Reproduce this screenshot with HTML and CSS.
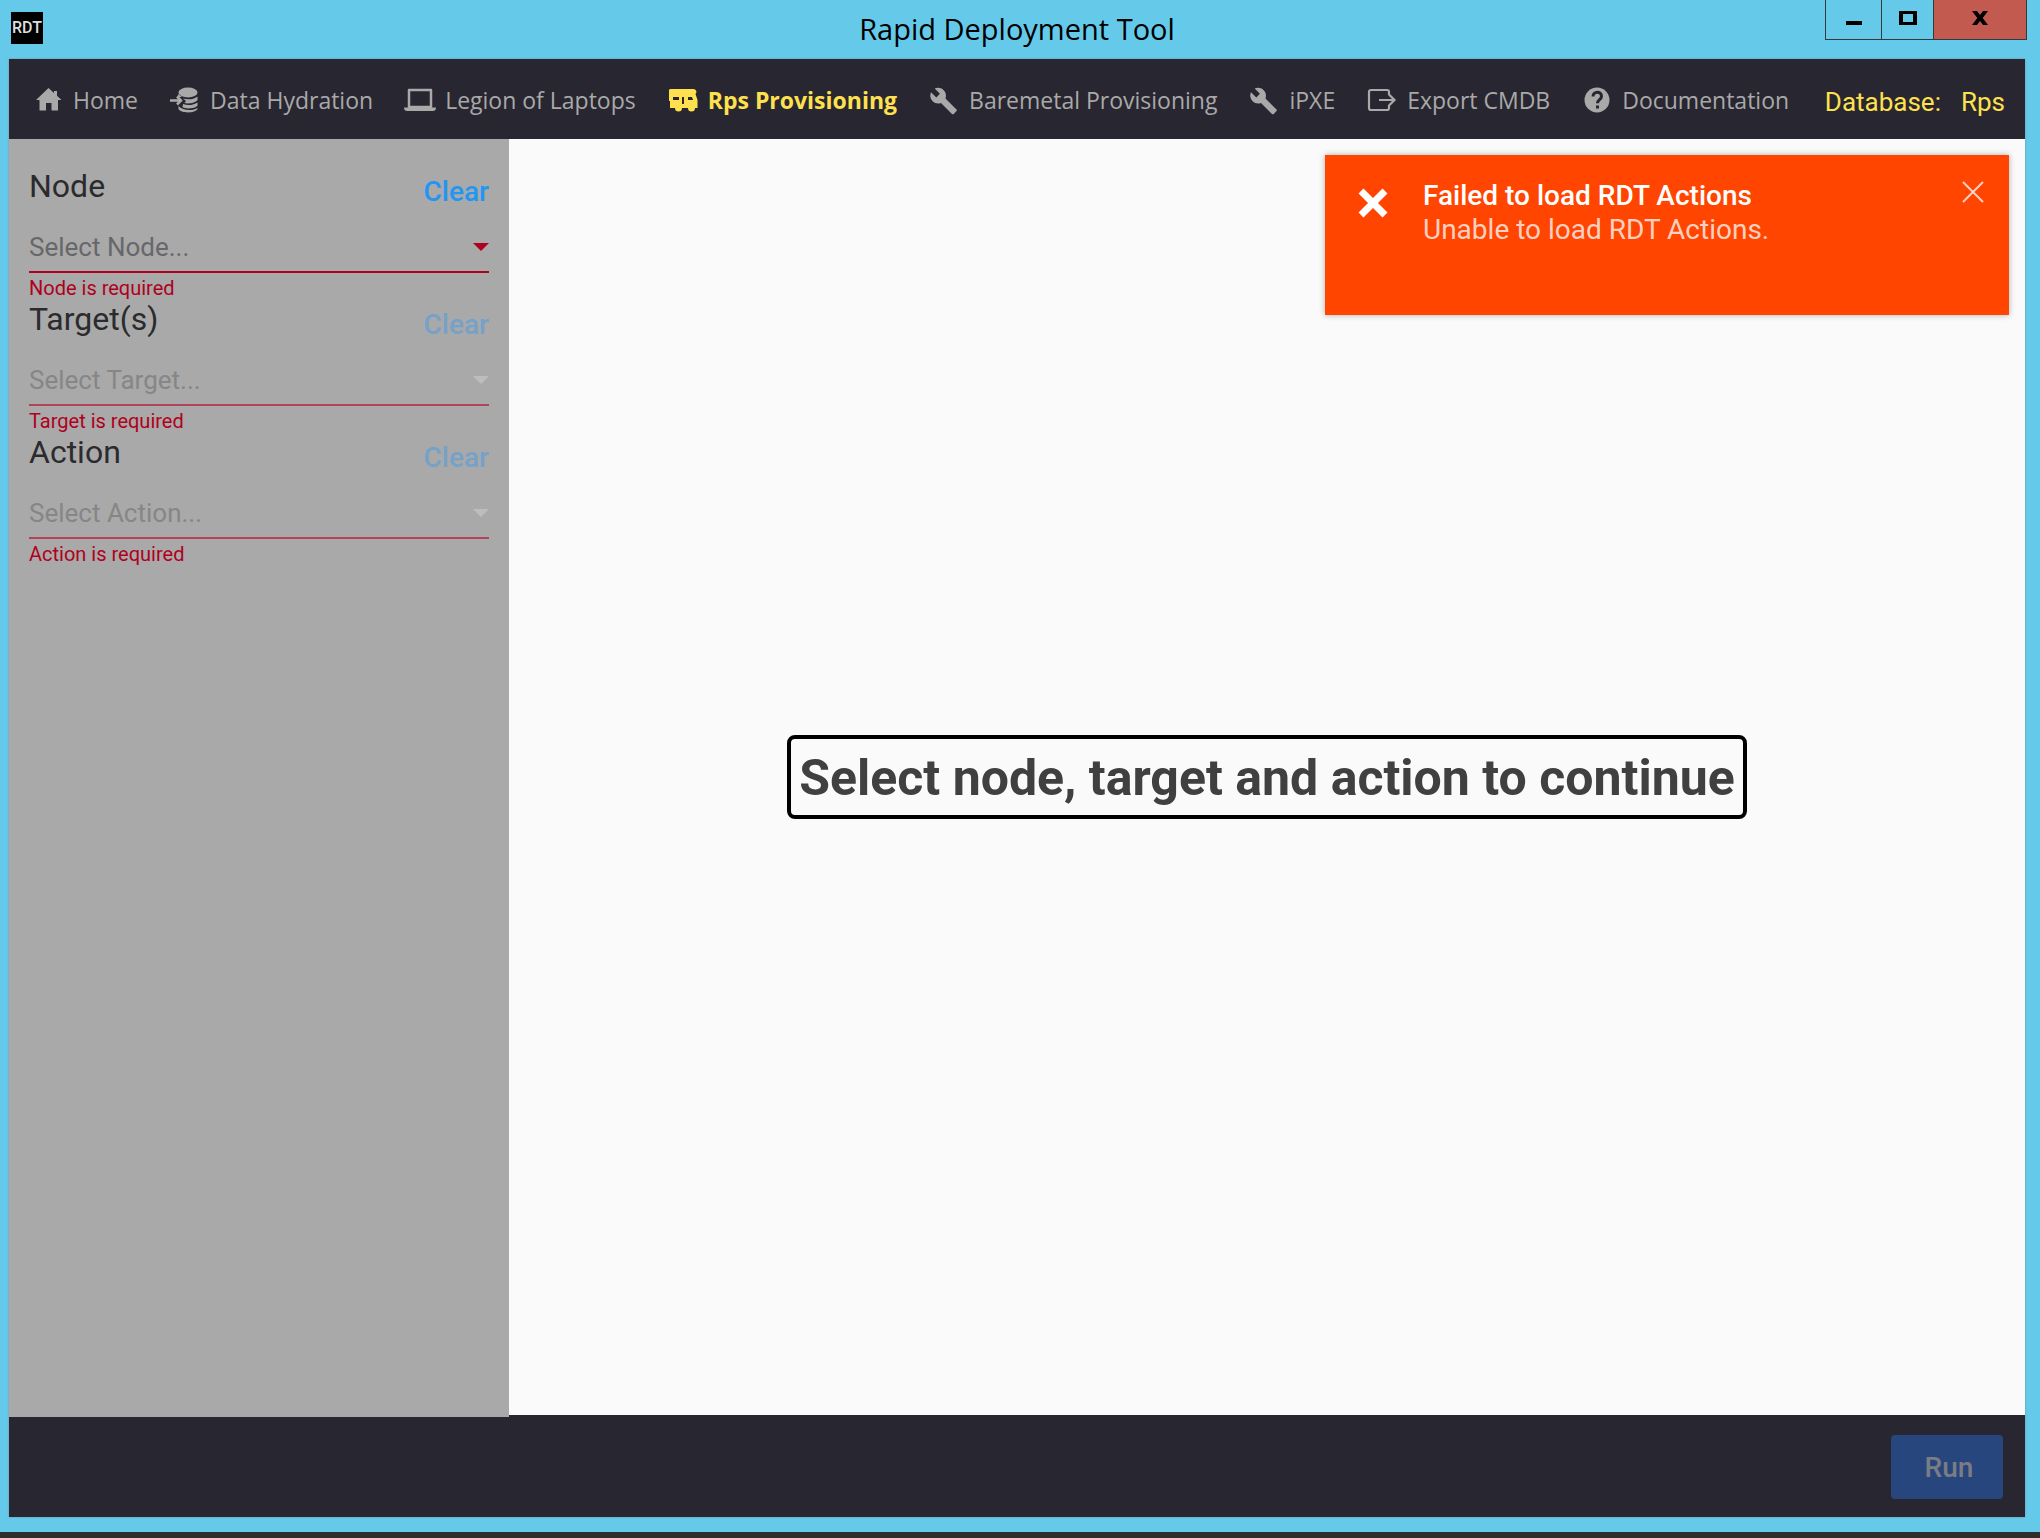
FILE: index.html
```html
<!DOCTYPE html>
<html lang="en">
<head>
<meta charset="utf-8">
<title>Rapid Deployment Tool</title>
<link rel="stylesheet" href="styles.css">
</head>
<body>
<div class="window">
  <header class="titlebar">
    <span class="app-icon">RDT</span>
    <h1 class="title">Rapid Deployment Tool</h1>
    <div class="window-buttons">
      <button class="win-btn win-min" aria-label="Minimize"><svg width="16" height="14" viewBox="0 0 16 14"><path d="M0 10h16v4H0z"/></svg></button>
      <button class="win-btn win-max" aria-label="Maximize"><svg width="18" height="14" viewBox="0 0 18 14"><path d="M0 0h18v14H0zM4 3v8h10V3z" fill-rule="evenodd"/></svg></button>
      <button class="win-btn win-close" aria-label="Close"><svg width="16" height="14" viewBox="0 0 16 14"><path d="M0 0h5l3 4 3-4h5l-5.300 7L16 14h-5l-3-4-3 4H0l5.300-7z"/></svg></button>
    </div>
  </header>

  <div class="app">
    <nav class="nav">
      <a class="nav-link" href="#home">
        <svg class="icon" viewBox="0 0 30 30"><path d="M14.500 3 2 15h3.500v10.500h6.500V18h5.500v7.500H24V15h3.500L23 10.700V6h-3v2z"/></svg>Home</a>
      <a class="nav-link" href="#hydration">
        <svg class="icon" viewBox="0 0 30 30"><ellipse cx="17" cy="7.500" rx="9.500" ry="5"/><path d="M12 13.500c4 1.500 11 1 14.500-2v3.500c-2 3-9 4-13 3l1.500-2zM12 19c5 2 11 1 14.500-1.500v3c-2 3-11 4-15 1.500zM7.500 21c4 5 15 5 19 2v1c-2 4.500-17 4.500-19 0zM7 9l4 3H7z"/><path d="M-1 15.500h11M6 11.500l4 4-4 4" fill="none" stroke="currentColor" stroke-width="2.500"/></svg>Data Hydration</a>
      <a class="nav-link" href="#laptops">
        <svg class="icon" viewBox="0 0 30 30"><path d="M3 5h22v17H3z" fill="none" stroke="currentColor" stroke-width="2.500" stroke-linejoin="round"/><path d="M-2 22.500h32c0 2-1 3.500-3 3.500H1c-2 0-3-1.500-3-3.500z"/></svg>Legion of Laptops</a>
      <a class="nav-link active" href="#rps" aria-current="page">
        <svg class="icon" viewBox="0 0 30 30"><path fill-rule="evenodd" d="M1 4h23q3 0 3.500 3l-1 2 2 6v8h-2.500a3.500 3.500 0 0 1-7 0h-6a3.500 3.500 0 0 1-7 0H1v-7H0V5zM4 12v3h6v-3zM13 12v7h2v-7zM19 12v3h5l-1-3z"/></svg>Rps Provisioning</a>
      <a class="nav-link" href="#baremetal">
        <svg class="icon" viewBox="0 0 30 30"><path d="M26.500 24.500 15.500 13.500c1-3 .5-6-1.800-8.300C11.200 2.700 7.600 2.200 4.700 3.500l5.200 5.200-3.600 3.700L1 7.200c-1.400 2.900-.8 6.500 1.700 9 2.300 2.300 5.500 2.800 8.300 1.700l11 11c.5.500 1.200.5 1.700 0l2.800-2.800c.5-.5.5-1.200 0-1.600z"/></svg>Baremetal Provisioning</a>
      <a class="nav-link" href="#ipxe">
        <svg class="icon" viewBox="0 0 30 30"><path d="M26.500 24.500 15.500 13.500c1-3 .5-6-1.800-8.300C11.200 2.700 7.600 2.200 4.700 3.500l5.200 5.200-3.600 3.700L1 7.200c-1.400 2.900-.8 6.500 1.700 9 2.300 2.300 5.500 2.800 8.300 1.700l11 11c.5.500 1.200.5 1.700 0l2.800-2.800c.5-.5.5-1.200 0-1.600z"/></svg>iPXE</a>
      <a class="nav-link" href="#export">
        <svg class="icon" viewBox="0 0 30 30"><path d="M21 10V7q0-2-2-2H3Q1 5 1 7v16q0 2 2 2h16q2 0 2-2v-3M11 15h15M21 9.500l5.500 5.500-5.500 5.500" fill="none" stroke="currentColor" stroke-width="2.200"/></svg>Export CMDB</a>
      <a class="nav-link" href="#docs">
        <svg class="icon" viewBox="0 0 30 30"><circle cx="14" cy="15" r="12.500"/><path class="mark" d="M10 11.500c0-5.500 8.500-5.500 8.500-.3 0 3.500-4 3.300-4 7M14.500 20.500v3"/></svg>Documentation</a>
      <p class="database"><span>Database:</span><span>Rps</span></p>
    </nav>

    <div class="workspace">
      <form class="sidebar">
        <div class="field">
          <div class="field-head"><label for="node">Node</label><button type="button" class="clear">Clear</button></div>
          <div class="select-box"><select id="node"><option>Select Node...</option></select></div>
          <p class="error">Node is required</p>
        </div>
        <div class="field">
          <div class="field-head"><label for="target">Target(s)</label><button type="button" class="clear" disabled>Clear</button></div>
          <div class="select-box disabled"><select id="target" disabled><option>Select Target...</option></select></div>
          <p class="error">Target is required</p>
        </div>
        <div class="field">
          <div class="field-head"><label for="action">Action</label><button type="button" class="clear" disabled>Clear</button></div>
          <div class="select-box disabled"><select id="action" disabled><option>Select Action...</option></select></div>
          <p class="error">Action is required</p>
        </div>
      </form>

      <main class="main">
        <h2 class="prompt">Select node, target and action to continue</h2>
        <div class="toast" role="alert">
          <svg class="toast-icon" viewBox="0 0 32 32"><path d="M4 4l24 24M28 4 4 28"/></svg>
          <div class="toast-text">
            <strong>Failed to load RDT Actions</strong>
            <p>Unable to load RDT Actions.</p>
          </div>
          <button class="toast-close" aria-label="Dismiss"><svg width="22" height="22" viewBox="0 0 22 22"><path d="M1 1l20 20M21 1 1 21"/></svg></button>
        </div>
      </main>
    </div>

    <footer class="footer"><button class="run" disabled>Run</button></footer>
  </div>
</div>
</body>
</html>
```

FILE: styles.css
```css
* { box-sizing: border-box; margin: 0; }

body {
  font-family: Roboto, sans-serif;
  color: #2b2b2e;
  background: #2d2d2d;
}

button { padding: 0; border: 0; background: none; font: inherit; }

.window {
  display: flex;
  flex-direction: column;
  height: calc(100vh - 6px);
  padding: 0 15px 15px 9px;
  background: #65caea;
}

/* Title bar */
.titlebar {
  display: grid;
  grid-template-columns: 1fr auto 1fr;
  align-items: start;
  height: 59px;
  flex: none;
}

.app-icon {
  display: flex;
  justify-content: center;
  width: 32px;
  height: 32px;
  margin: 12px 0 0 2px;
  overflow: hidden;
  background: #000;
  color: #ddd;
  font: 500 16px/32px Roboto, sans-serif;
}

.title {
  color: #000;
  font: 400 29px/58px "Open Sans", sans-serif;
}

.window-buttons {
  display: flex;
  justify-self: end;
  height: 40px;
  margin-right: -2px;
  border: solid #35393b;
  border-width: 0 1px 1px;
}

.win-btn {
  display: flex;
  justify-content: center;
  width: 52px;
  padding-top: 11px;
  border-left: 1px solid #35393b;
}

.win-min { width: 55px; border-left: 0; }
.win-close { width: 93px; background: #c35a50; }

/* Application shell */
.app {
  display: flex;
  flex: 1;
  flex-direction: column;
  box-shadow: 0 0 2px #7c8b96;
}

.nav {
  display: flex;
  gap: 33px;
  align-items: center;
  height: 80px;
  padding: 2px 20px 0 25px;
  background: #282630;
  white-space: nowrap;
}

.nav-link {
  display: flex;
  gap: 9px;
  align-items: center;
  color: #a9a9a9;
  font: 23px/34px "Open Sans", sans-serif;
  text-decoration: none;
}

.nav-link.active { color: #ffe14f; font-weight: 700; }

.icon {
  width: 30px;
  height: 30px;
  overflow: visible;
  fill: currentColor;
}

.icon .mark { fill: none; stroke: #282630; stroke-width: 3; }

.database {
  display: flex;
  gap: 20px;
  margin-left: auto;
  padding-top: 3px;
  color: #ffe14f;
  font-size: 26px;
  line-height: 34px;
}

.workspace { display: flex; flex: 1; }

/* Sidebar form */
.sidebar {
  flex: none;
  width: 500px;
  padding: 26px 20px;
  background: #a9a9a9;
}

.field-head {
  display: flex;
  justify-content: space-between;
  height: 54px;
}

.field-head label { font-size: 32px; line-height: 42px; }

.clear {
  color: #2196f3;
  font-size: 28px;
  font-weight: 500;
  line-height: 54px;
}

.clear:disabled { color: #76a1c8; }

.select-box {
  position: relative;
  height: 54px;
  border-bottom: 2px solid #b00020;
}

.select-box::after {
  content: "";
  position: absolute;
  right: 0;
  top: 24px;
  border: solid transparent;
  border-width: 8px 8px 0;
  border-top-color: #b00020;
  pointer-events: none;
}

.select-box.disabled { border-color: #b2435a; }
.select-box.disabled::after { border-top-color: #bdbdbd; }

.select-box select {
  width: 100%;
  height: 52px;
  padding: 3px 0 0;
  border: 0;
  appearance: none;
  background: none;
  color: #67676a;
  font: 26px/34px Roboto, sans-serif;
  opacity: 1;
}

.select-box select:disabled { color: #868686; }

.error {
  padding-top: 5px;
  color: #b00020;
  font-size: 20px;
  line-height: 20px;
}

/* Main area */
.main {
  position: relative;
  display: flex;
  flex: 1;
  align-items: center;
  justify-content: center;
  border-bottom: 2px solid #282630;
  background: #fafafa;
}

.prompt {
  padding: 9px 8px 7px;
  border: 4px solid #000;
  border-radius: 8px;
  color: #404040;
  font-size: 50px;
  font-weight: 700;
  line-height: 60px;
}

.toast {
  position: absolute;
  top: 16px;
  right: 16px;
  display: flex;
  align-items: flex-start;
  width: 684px;
  height: 160px;
  padding: 24px 25px 24px 32px;
  background: #ff4500;
  box-shadow: 0 0 6px rgba(0, 0, 0, .3);
  color: #fff;
}

.toast-icon {
  width: 32px;
  height: 32px;
  margin-top: 8px;
  fill: none;
  stroke: #fff;
  stroke-width: 7;
}

.toast-text {
  flex: 1;
  margin-left: 34px;
  font-size: 28px;
  line-height: 34px;
}

.toast-text strong { font-weight: 500; }
.toast-text p { color: #ffd0c0; }

.toast-close svg {
  display: block;
  margin-top: 2px;
  fill: none;
  stroke: #ffd0c0;
  stroke-width: 2;
}

.footer {
  display: flex;
  justify-content: flex-end;
  flex: none;
  height: 100px;
  padding: 18px 22px;
  background: #282630;
}

.run {
  width: 112px;
  height: 64px;
  padding-left: 4px;
  border-radius: 4px;
  background: #28467e;
  color: #7c7c84;
  font-size: 28px;
  font-weight: 500;
}
```
